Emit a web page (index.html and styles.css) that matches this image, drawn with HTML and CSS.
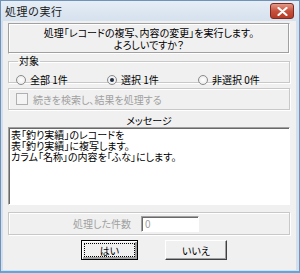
FILE: index.html
```html
<!DOCTYPE html>
<html lang="ja">
<head>
  <meta charset="UTF-8" />
  <title>処理の実行</title>
  <link rel="stylesheet" href="styles.css">
</head>
<body>
  <div class="window">
    <div class="titlebar">
      <span class="title">処理の実行</span>
      <span class="close">
        <svg width="11" height="9" viewBox="0 0 11 9">
          <path d="M1.5 1 L9.5 8 M9.5 1 L1.5 8" stroke="#fff" stroke-width="2.2" stroke-linecap="round" />
        </svg>
      </span>
    </div>

    <div class="client">
      <div class="prompt">処理「レコードの複写、内容の変更」を実行します。<br>よろしいですか？</div>

      <fieldset class="group target">
        <legend>対象</legend>
        <label class="radio"><span class="dot"></span>全部 1件</label>
        <label class="radio"><span class="dot checked"></span>選択 1件</label>
        <label class="radio"><span class="dot"></span>非選択 0件</label>
      </fieldset>

      <div class="group check-row">
        <span class="checkbox"></span>
        <span class="disabled">続きを検索し、結果を処理する</span>
      </div>

      <div class="msg-label">メッセージ</div>
      <div class="messages">表「釣り実績」のレコードを<br>表「釣り実績」に複写します。<br>カラム「名称」の内容を「ふな」にします。</div>

      <div class="group count-row">
        <span class="disabled">処理した件数</span>
        <span class="field">0</span>
      </div>

      <div class="buttons">
        <button class="btn default">はい</button>
        <button class="btn">いいえ</button>
      </div>
    </div>
  </div>
</body>
</html>
```

FILE: styles.css
```css
body {
  margin: 0;
  font-family: "Noto Sans CJK JP", "Noto Sans", sans-serif;
  font-size: 10px;
  color: #000;
  background: #fff;
}

.window {
  width: 300px;
  height: 273px;
  box-sizing: border-box;
  display: flex;
  flex-direction: column;
  background: #d3dfec;
  border: 1px solid #6f92b8;
  border-bottom: 2px solid #5aa9dc;
}

.titlebar {
  height: 20px;
  display: flex;
  align-items: center;
  justify-content: space-between;
  padding: 0 5px 0 4px;
  background: linear-gradient(#e6edf5, #d5e1ee);
}

.title {
  font-size: 11px;
  letter-spacing: 0.5px;
  color: #1a1a1a;
}

.close {
  width: 22px;
  height: 14px;
  display: flex;
  align-items: center;
  justify-content: center;
  border: 1px solid #7a2b22;
  border-radius: 3px;
  background: linear-gradient(#e49a88, #c7513d 50%, #b63b27);
}

.client {
  flex: 1;
  margin: 0 3px 1px 2px;
  padding: 2px 6px 0 5px;
  background: #f0f0f0;
  display: flex;
  flex-direction: column;
  font-feature-settings: "palt";
}

.prompt {
  height: 31px;
  padding-top: 3px;
  box-sizing: border-box;
  text-align: center;
  line-height: 12px;
  border: 1px solid #a0a0a0;
  border-right-color: #fff;
  border-bottom-color: #fff;
  box-shadow: inset -1px -1px 0 #a0a0a0, inset 1px 1px 0 #fff;
}

.group {
  border: 1px solid #c8c8c8;
  box-shadow: inset 1px 1px 0 #fff, 1px 1px 0 #fff;
}

.target {
  margin: 1px 0 0;
  padding: 5px 0 5px 7px;
  display: flex;
  height: 28px;
  box-sizing: border-box;
}

.target legend {
  padding: 0 1px;
  margin-left: 2px;
  font-size: 10px;
  line-height: 12px;
}

.radio {
  display: flex;
  align-items: center;
  gap: 4px;
  width: 91px;
}

.dot {
  width: 10px;
  height: 10px;
  box-sizing: border-box;
  border-radius: 50%;
  border: 1px solid #8a8a8a;
  background: radial-gradient(#fff, #e6e6e6);
  position: relative;
}

.dot.checked::after {
  content: "";
  position: absolute;
  left: 2px;
  top: 2px;
  width: 4px;
  height: 4px;
  border-radius: 50%;
  background: #1f2f44;
}

.check-row {
  margin-top: 5px;
  height: 22px;
  box-sizing: border-box;
  display: flex;
  align-items: center;
  gap: 5px;
  padding-left: 7px;
}

.checkbox {
  width: 10px;
  height: 10px;
  border: 1px solid #b0b0b0;
  background: #f4f4f4;
}

.disabled {
  color: #a0a0a0;
}

.msg-label {
  text-align: center;
  line-height: 12px;
  margin-top: 5px;
}

.messages {
  height: 78px;
  box-sizing: border-box;
  padding: 1px 2px;
  line-height: 11px;
  background: #fff;
  border: 1px solid #fff;
  border-top-color: #a0a0a0;
  border-left-color: #a0a0a0;
  box-shadow: inset 1px 1px 0 #696969;
}

.count-row {
  margin-top: 7px;
  height: 23px;
  box-sizing: border-box;
  display: flex;
  align-items: center;
  justify-content: flex-end;
  gap: 10px;
  padding-right: 90px;
}

.field {
  width: 58px;
  height: 16px;
  box-sizing: border-box;
  background: #fff;
  border: 1px solid #fff;
  border-top-color: #a0a0a0;
  border-left-color: #a0a0a0;
  box-shadow: inset 1px 1px 0 #696969;
  color: #a0a0a0;
  line-height: 14px;
  padding-left: 3px;
}

.buttons {
  display: flex;
  gap: 27px;
  padding-left: 73px;
  margin-top: 5px;
}

.btn {
  width: 57px;
  height: 20px;
  font: inherit;
  font-size: 10px;
  background: #f0f0f0;
  border: 1px solid;
  border-color: #fff #404040 #404040 #fff;
  box-shadow: inset -1px -1px 0 #a0a0a0;
  padding: 0;
}

.btn.default {
  border: 1px solid #000;
  box-shadow: inset 1px 1px 0 #fff, inset -2px -2px 0 #a0a0a0;
  outline: 1px dotted #000;
  outline-offset: -4px;
}

.btn + .btn {
  width: 62px;
}
```
